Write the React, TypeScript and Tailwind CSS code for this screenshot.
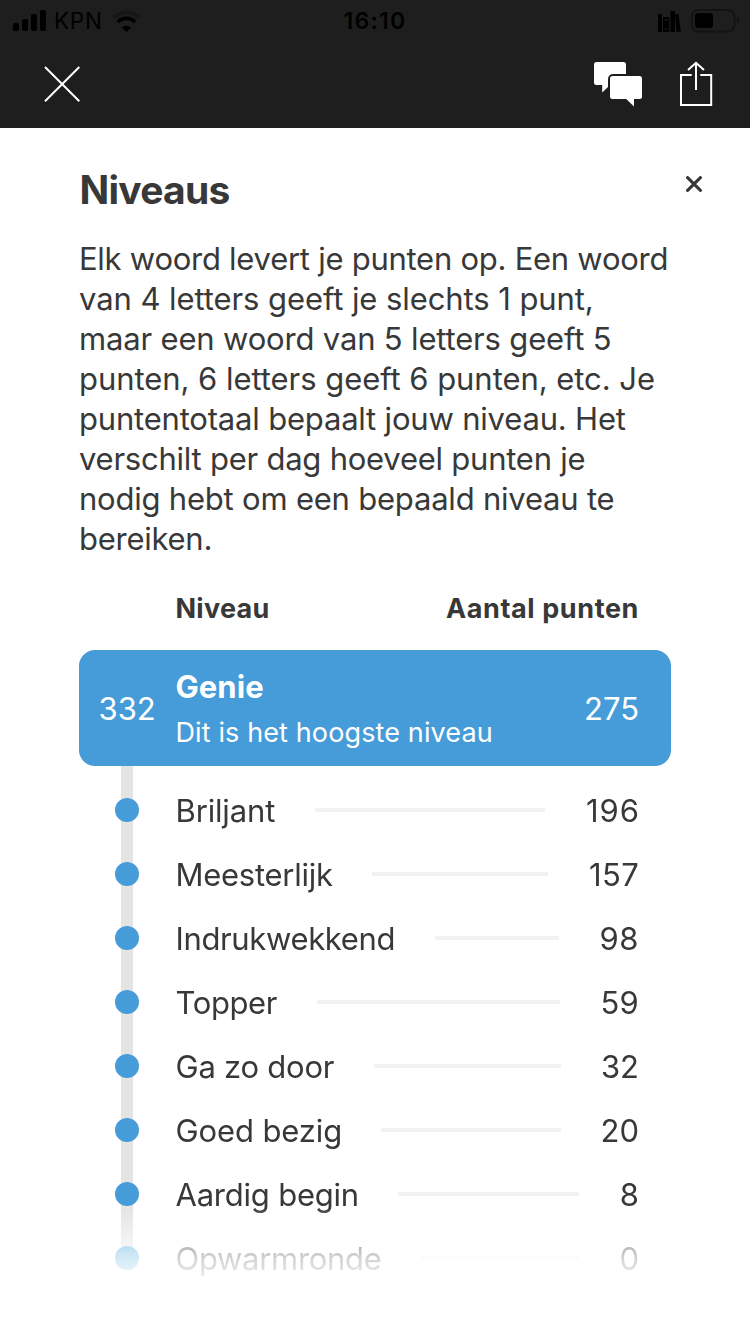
type Level = {
  name: string;
  points: number;
  nameClass: string;
  pointsClass: string;
};

const levels: Level[] = [
  { name: 'Briljant', points: 196, nameClass: 'w-[140px] tracking-[-0.15px]', pointsClass: 'w-[95px] tracking-[1px] -mr-px' },
  { name: 'Meesterlijk', points: 157, nameClass: 'w-[197px] tracking-[-0.26px]', pointsClass: 'w-[91px] tracking-[0.3px]' },
  { name: 'Indrukwekkend', points: 98, nameClass: 'w-[260px] tracking-[-0.36px]', pointsClass: 'w-[80px] tracking-[0.6px]' },
  { name: 'Topper', points: 59, nameClass: 'w-[142px] tracking-[-0.38px]', pointsClass: 'w-[79px] tracking-[0.2px]' },
  { name: 'Ga zo door', points: 32, nameClass: 'w-[199px] tracking-[-0.23px]', pointsClass: 'w-[78px]' },
  { name: 'Goed bezig', points: 20, nameClass: 'w-[206px] tracking-[-0.12px]', pointsClass: 'w-[78px]' },
  { name: 'Aardig begin', points: 8, nameClass: 'w-[223px] tracking-[-0.22px]', pointsClass: 'w-[60px]' },
  { name: 'Opwarmronde', points: 0, nameClass: 'w-[246px] tracking-[-0.3px]', pointsClass: 'w-[60px]' },
];

const intro: [string, string][] = [
  ['Elk woord levert je punten op. Een woord', 'tracking-[-0.26px]'],
  ['van 4 letters geeft je slechts 1 punt,', 'tracking-[-0.08px]'],
  ['maar een woord van 5 letters geeft 5', 'tracking-[-0.17px]'],
  ['punten, 6 letters geeft 6 punten, etc. Je', 'tracking-[-0.05px]'],
  ['puntentotaal bepaalt jouw niveau. Het', 'tracking-[-0.19px]'],
  ['verschilt per dag hoeveel punten je', 'tracking-[-0.235px]'],
  ['nodig hebt om een bepaald niveau te', 'tracking-[-0.21px]'],
  ['bereiken.', 'tracking-[-0.26px]'],
];

function StatusBar() {
  return (
    <div className="grid h-10 grid-cols-3 items-center text-black">
      <div className="flex h-10 items-center pl-[13px]">
        <svg width="34" height="40" viewBox="0 0 34 40" fill="black">
          <rect x="0" y="22" width="6" height="8" rx="1.8" />
          <rect x="9" y="18" width="6" height="12" rx="1.8" />
          <rect x="18" y="13" width="6" height="17" rx="1.8" />
          <rect x="27" y="9" width="6" height="21" rx="1.8" />
        </svg>
        <span className="ml-[7px] w-[57px] text-[22.5px] leading-10 tracking-[0.7px]">KPN</span>
        <svg width="32" height="40" viewBox="0 0 32 40" fill="none">
          <path d="M2.6 16.6 A18.5 18.5 0 0 1 28.4 16.6" stroke="#161616" strokeWidth="3.6" />
          <path d="M6.8 21 A12.2 12.2 0 0 1 24.2 21" stroke="black" strokeWidth="3.6" />
          <path d="M15.5 31 L10.9 26.6 A6.5 6.5 0 0 1 20.1 26.6 Z" fill="black" />
        </svg>
      </div>
      <div className="pt-px text-center text-[23px] font-semibold leading-10 tracking-[1.3px]">16:10</div>
      <div className="flex justify-end">
        <svg width="93" height="40" viewBox="657 0 93 40" fill="none">
          <rect x="658" y="13" width="4" height="18" rx="0.6" fill="black" />
          <path fillRule="evenodd" d="M663 16h6.2v15H663z M664.6 18.2v1.3h3v-1.3z M664.6 27.2v1.3h3v-1.3z" fill="black" />
          <rect x="670.4" y="10" width="4.6" height="21" rx="0.6" fill="black" />
          <path d="M675 13.4 L678.4 12.8 L680.8 30.6 L676.6 31 Z" fill="black" />
          <rect x="692" y="9" width="42.5" height="21.5" rx="6.5" stroke="#131313" strokeWidth="2" />
          <rect x="695" y="12" width="18" height="15" rx="3.6" fill="black" />
          <path d="M737 15.5 Q739 17 739 19.5 T737 23.5 Z" fill="#131313" />
        </svg>
      </div>
    </div>
  );
}

function TopBar() {
  return (
    <header className="h-32 shrink-0 bg-[#1e1e1e]">
      <StatusBar />
      <div className="flex h-[88px] items-center justify-between pl-11 pr-9">
        <button aria-label="Sluiten">
          <svg className="block" width="36" height="88" viewBox="44 40 36 88" fill="none" stroke="white" strokeWidth="2">
            <path d="M45 67 L79.3 101.2 M79.3 67 L45 101.2" />
          </svg>
        </button>
        <div className="flex gap-[36px]">
          <button aria-label="Reacties">
            <svg className="block" width="50" height="88" viewBox="593 40 50 88" fill="white">
              <path d="M596.5 62 H623.5 Q626 62 626 64.5 V74 H613.5 Q608 74 608 79.5 V87 L602.2 92.5 V85 H596.5 Q594 85 594 82.5 V64.5 Q594 62 596.5 62 Z" />
              <path d="M612.5 76 H639.5 Q642 76 642 78.5 V96.5 Q642 99 639.5 99 H634 V106.5 L626.2 99 H612.5 Q610 99 610 96.5 V78.5 Q610 76 612.5 76 Z" />
            </svg>
          </button>
          <button aria-label="Delen">
            <svg className="block" width="35" height="88" viewBox="679 40 35 88" fill="none" stroke="white" strokeWidth="2">
              <path d="M691.7 75 H681 V105 H711.2 V75 H700.3" />
              <path d="M696 90 V63 M688 70 L696 62.8 L704 70" />
            </svg>
          </button>
        </div>
      </div>
    </header>
  );
}

function CurrentLevel() {
  return (
    <div className="mt-[25px] flex h-[116px] items-center rounded-2xl bg-[#469bd9] pl-[19.5px] pr-8 text-white">
      <span className="w-[77px] pt-px text-[31px] leading-10">332</span>
      <div className="flex flex-1 flex-col gap-2 pt-0.5">
        <span className="text-[31px] font-bold leading-10 tracking-[0.05px]">Genie</span>
        <span className="text-[27px] leading-9 tracking-[0.12px]">Dit is het hoogste niveau</span>
      </div>
      <span className="pt-px text-[31px] leading-10">275</span>
    </div>
  );
}

function LevelRow({ level, last }: { level: Level; last: boolean }) {
  return (
    <li className="flex h-16 items-center pl-9 pr-8">
      <span className={`relative size-6 rounded-full ${last ? 'bg-[#3aa4d8]' : 'bg-[#469bd9]'}`} />
      <span className={`ml-9 shrink-0 whitespace-nowrap pl-[0.5px] pt-px leading-10 ${level.nameClass}`}>{level.name}</span>
      <span className="h-1 flex-1 bg-[#f2f2f2]" />
      <span className={`shrink-0 pt-px text-right leading-10 ${level.pointsClass}`}>{level.points}</span>
    </li>
  );
}

export default function App() {
  return (
    <div className="flex h-[1334px] w-[750px] flex-col overflow-hidden bg-white font-['Inter','Liberation_Sans',sans-serif] text-[#383838]">
      <TopBar />
      <main className="flex-1 pl-[79px] pr-[79px] pt-[38px]">
        <div className="-mr-[31px] flex items-start justify-between">
          <h1 className="pl-[0.5px] text-[39px] font-bold leading-[48px] tracking-[-0.75px]">Niveaus</h1>
          <button aria-label="Venster sluiten" className="mt-2.5">
            <svg className="block" width="16" height="16" viewBox="0 0 16 16" stroke="#383838" strokeWidth="3.1" strokeLinecap="round">
              <path d="M1.6 1.6 L14.4 14.4 M14.4 1.6 L1.6 14.4" />
            </svg>
          </button>
        </div>
        <p className="mt-[25px] whitespace-nowrap text-[31px] leading-10">
          {intro.map(([line, tracking]) => (
            <span key={line} className={`block ${tracking}`}>{line} </span>
          ))}
        </p>
        <div className="mt-[34px] flex justify-between pl-[96.5px] pr-8 text-[27px] font-bold leading-8">
          <span className="tracking-[0.28px]">Niveau</span>
          <span className="tracking-[0.6px]">Aantal punten</span>
        </div>
        <CurrentLevel />
        <div className="relative h-[536px] pt-3 [mask-image:linear-gradient(to_bottom,#000_440px,rgba(0,0,0,0.36)_480px,rgba(0,0,0,0.22)_492px,rgba(0,0,0,0.13)_508px,transparent_534px)]">
          <div className="absolute left-[42px] top-0 h-[492px] w-3 bg-[#e4e4e4]" />
          <ul className="relative text-[31px]">
            {levels.map((level, i) => (
              <LevelRow key={level.name} level={level} last={i === levels.length - 1} />
            ))}
          </ul>
        </div>
      </main>
    </div>
  );
}
